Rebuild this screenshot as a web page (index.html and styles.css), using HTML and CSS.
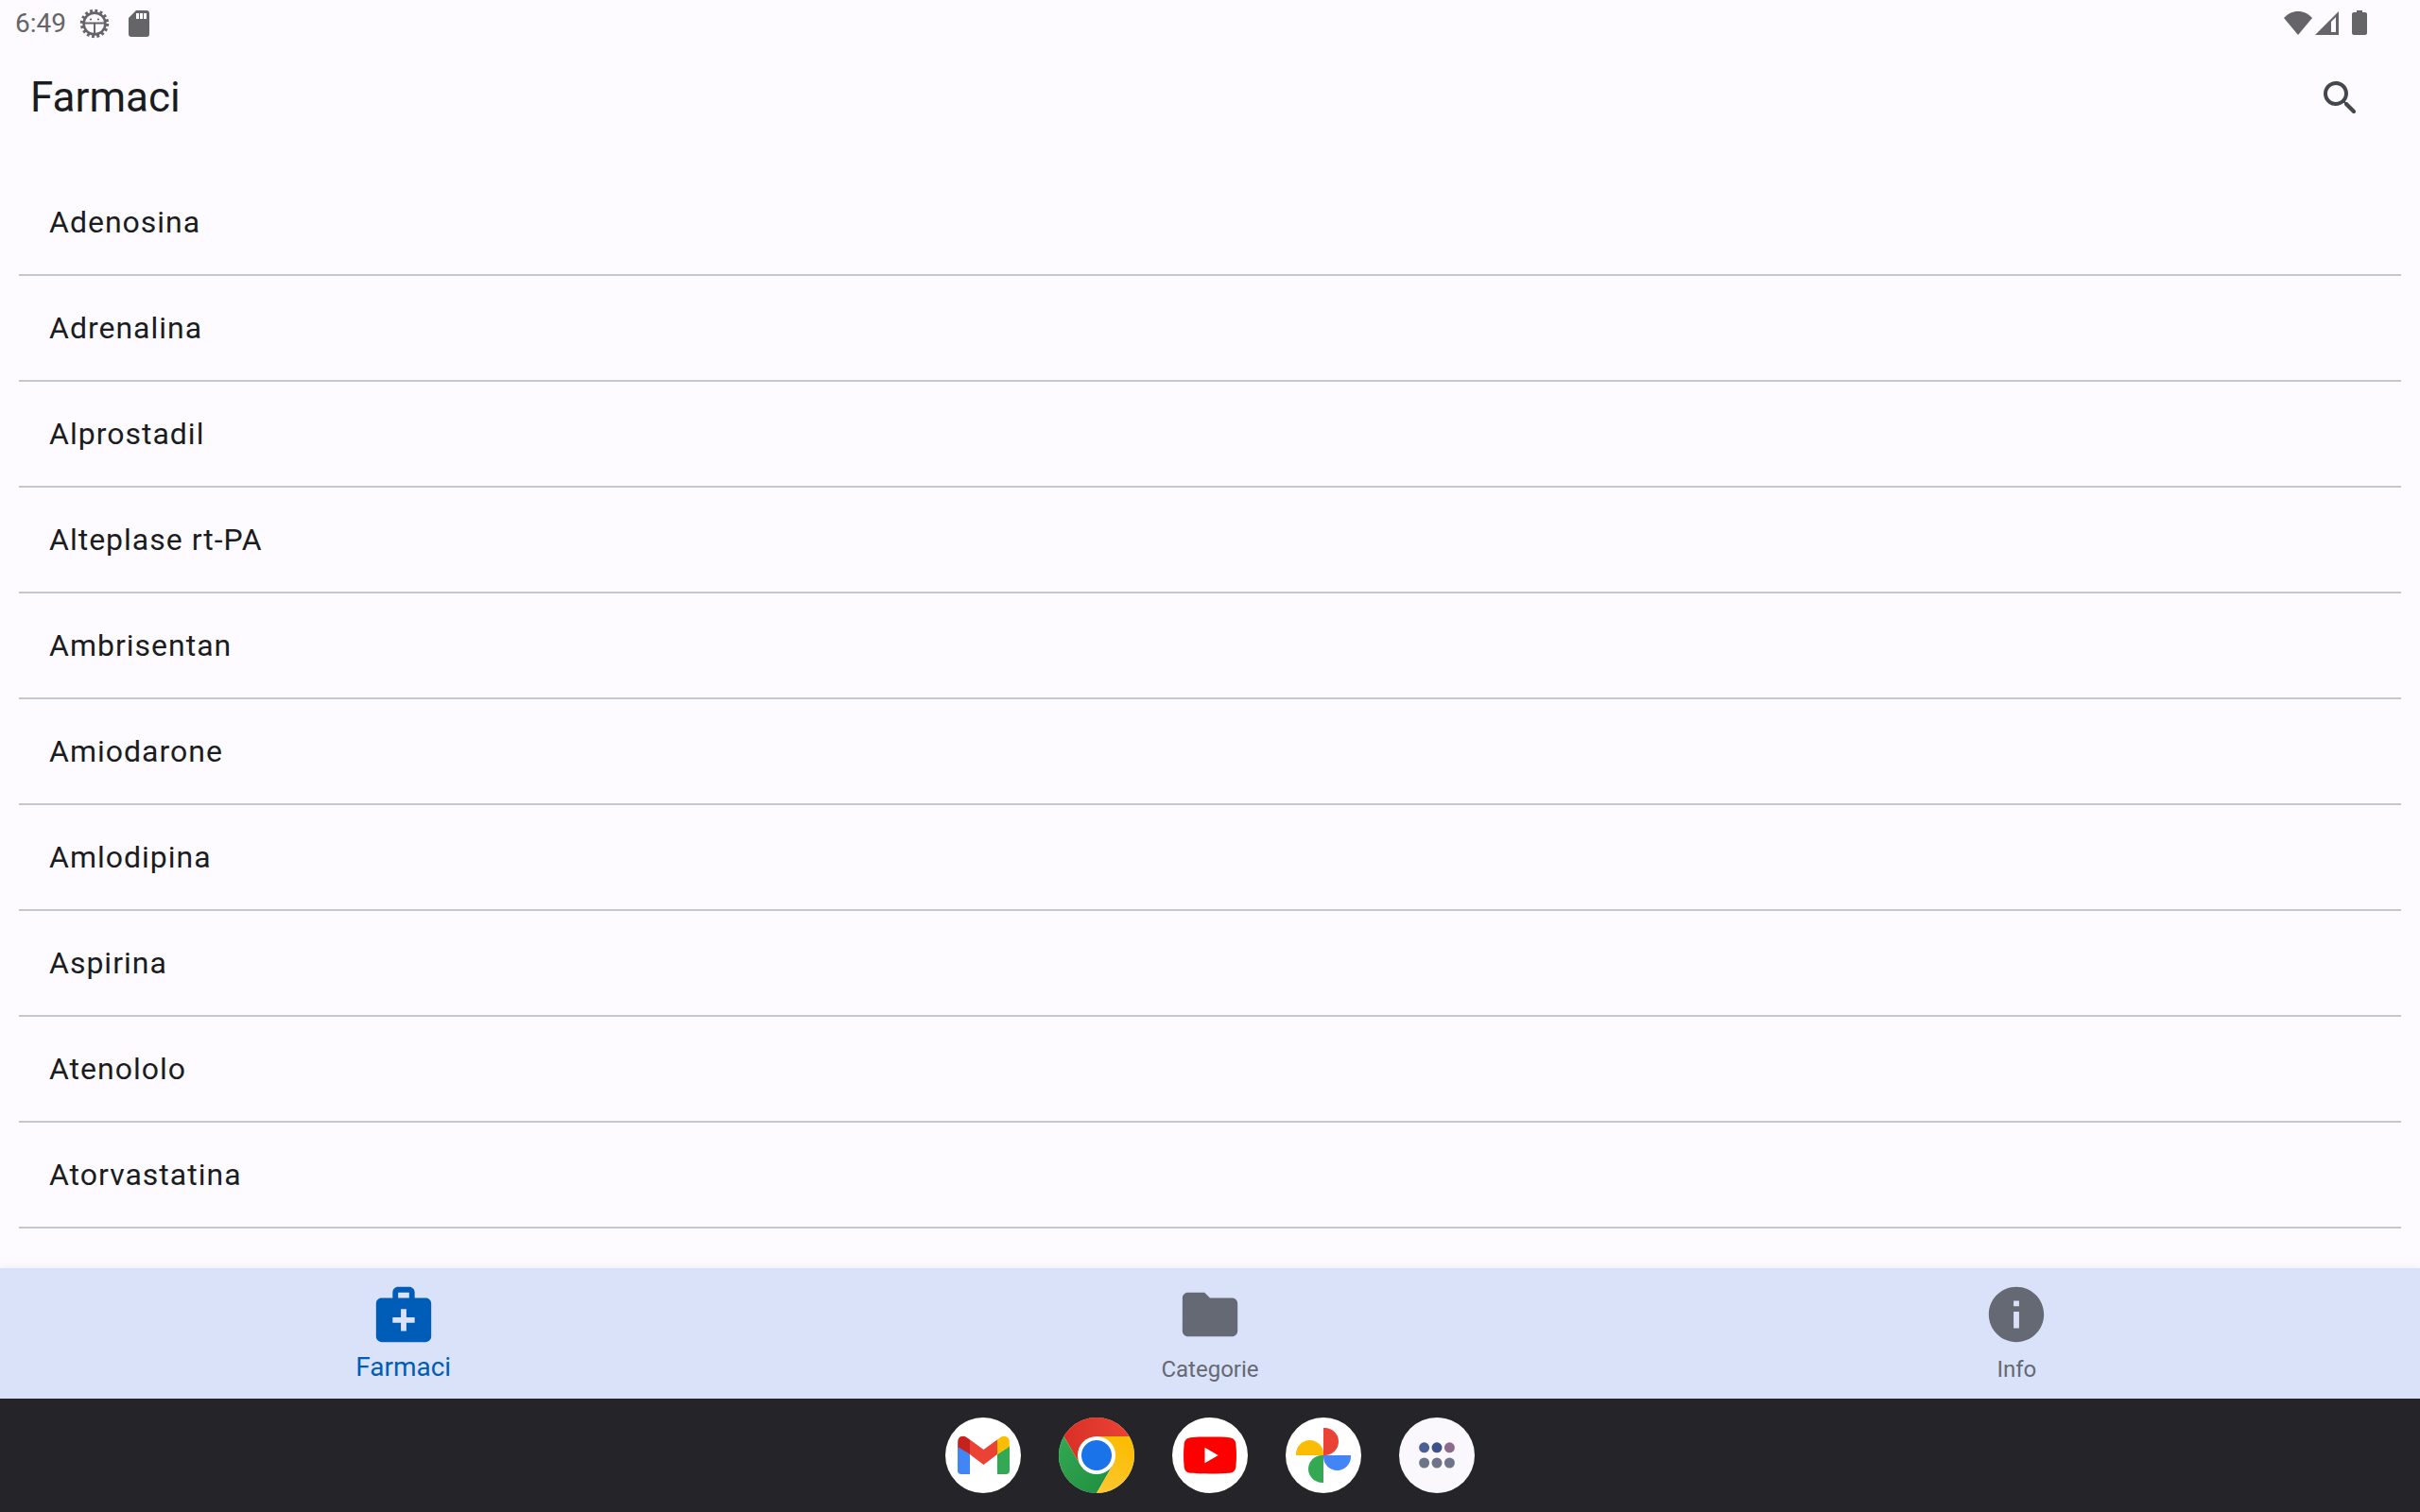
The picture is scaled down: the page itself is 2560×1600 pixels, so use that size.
FILE: index.html
```html
<!DOCTYPE html>
<html lang="it">
<head>
<meta charset="utf-8">
<meta name="viewport" content="width=device-width, initial-scale=1">
<title>Farmaci</title>
<link rel="stylesheet" href="styles.css">
</head>
<body>
<div class="status-bar">
  <div class="status-group status-left">
    <time class="clock">6:49</time>
    <svg class="status-gear" viewBox="0 0 32 32" aria-hidden="true">
      <circle cx="16" cy="16" r="11.400" fill="none" stroke="currentColor" stroke-width="2.600"/>
      <circle cx="16" cy="16" r="13.500" fill="none" stroke="currentColor" stroke-width="3.400" stroke-dasharray="2.800 2.502"/>
      <path d="M5 15.600h22M16 15.600V28" stroke="currentColor" stroke-width="2" fill="none"/>
      <circle cx="12" cy="11.500" r="1.100" fill="currentColor"/>
      <circle cx="20" cy="11.500" r="1.100" fill="currentColor"/>
    </svg>
    <svg class="status-card" viewBox="0 0 22 28" aria-hidden="true">
      <path fill="currentColor" fill-rule="evenodd" d="M8 0h11a3 3 0 0 1 3 3v22a3 3 0 0 1-3 3H3a3 3 0 0 1-3-3V8zM8 3v6h3V3zM12 3v6h3V3zM16 3v6h3V3z"/>
    </svg>
  </div>
  <div class="status-group">
    <svg class="status-wifi" viewBox="0 0 30 25" aria-hidden="true"><path fill="currentColor" d="M15 25 0 7C4 2.500 9.500 0 15 0s11 2.500 15 7z"/></svg>
    <svg class="status-signal" viewBox="0 0 25 25" aria-hidden="true"><path fill="currentColor" fill-rule="evenodd" d="M25 0v25H0zM17 11v11h5V6z"/></svg>
    <svg class="status-battery" viewBox="0 0 16 26" aria-hidden="true"><path fill="currentColor" d="M5 0h6v2h3a2 2 0 0 1 2 2v20a2 2 0 0 1-2 2H2a2 2 0 0 1-2-2V4a2 2 0 0 1 2-2h3z"/></svg>
  </div>
</div>

<header class="app-bar">
  <h1 class="title">Farmaci</h1>
  <button class="search" type="button" aria-label="Cerca">
    <svg viewBox="0 0 24 24" aria-hidden="true"><path fill="currentColor" d="M15.500 14h-.79l-.28-.27c1.200-1.400 1.820-3.310 1.480-5.340-.47-2.780-2.790-5-5.590-5.340-4.230-.52-7.790 3.040-7.270 7.270.34 2.800 2.560 5.120 5.340 5.590 2.030.34 3.940-.28 5.340-1.480l.27.28v.79l4.250 4.250c.41.41 1.080.41 1.490 0 .41-.41.41-1.080 0-1.490L15.500 14zm-6 0C7.010 14 5 11.990 5 9.500S7.010 5 9.500 5 14 7.010 14 9.500 11.990 14 9.500 14z"/></svg>
  </button>
</header>

<main class="content">
  <ul class="drug-list">
    <li><a class="drug" href="#adenosina">Adenosina</a></li>
    <li><a class="drug" href="#adrenalina">Adrenalina</a></li>
    <li><a class="drug" href="#alprostadil">Alprostadil</a></li>
    <li><a class="drug" href="#alteplase">Alteplase rt-PA</a></li>
    <li><a class="drug" href="#ambrisentan">Ambrisentan</a></li>
    <li><a class="drug" href="#amiodarone">Amiodarone</a></li>
    <li><a class="drug" href="#amlodipina">Amlodipina</a></li>
    <li><a class="drug" href="#aspirina">Aspirina</a></li>
    <li><a class="drug" href="#atenololo">Atenololo</a></li>
    <li><a class="drug" href="#atorvastatina">Atorvastatina</a></li>
  </ul>
</main>

<nav class="tabs">
  <a class="tab tab-active" href="#farmaci" aria-current="page">
    <svg viewBox="0 0 24 24" aria-hidden="true"><path fill="currentColor" d="M20 6h-4V4c0-1.100-.9-2-2-2h-4c-1.100 0-2 .9-2 2v2H4c-1.100 0-2 .9-2 2v12c0 1.100.9 2 2 2h16c1.100 0 2-.9 2-2V8c0-1.100-.9-2-2-2zM10 4h4v2h-4V4zm6 11h-3v3h-2v-3H8v-2h3v-3h2v3h3v2z"/></svg>
    <span class="tab-label">Farmaci</span>
  </a>
  <a class="tab" href="#categorie">
    <svg viewBox="0 0 24 24" aria-hidden="true"><path fill="currentColor" d="M10 4H4c-1.100 0-1.990.9-1.990 2L2 18c0 1.100.9 2 2 2h16c1.100 0 2-.9 2-2V8c0-1.100-.9-2-2-2h-8l-2-2z"/></svg>
    <span class="tab-label">Categorie</span>
  </a>
  <a class="tab" href="#info">
    <svg viewBox="0 0 24 24" aria-hidden="true"><path fill="currentColor" d="M12 2C6.480 2 2 6.480 2 12s4.480 10 10 10 10-4.480 10-10S17.520 2 12 2zm1 15h-2v-6h2v6zm0-8h-2V7h2v2z"/></svg>
    <span class="tab-label">Info</span>
  </a>
</nav>

<footer class="dock">
  <button class="dock-app" type="button" aria-label="Gmail">
    <svg viewBox="0 0 80 80" aria-hidden="true">
      <path fill="#4285f4" d="M13 30v26a4 4 0 0 0 4 4h9V39z"/>
      <path fill="#34a853" d="M55 39v21h9a4 4 0 0 0 4-4V30z"/>
      <path fill="#c5221f" d="M13.200 31v-5.500c0-5.200 5.200-7.500 9.300-4.600L26 23.500V39z"/>
      <path fill="#fbbc04" d="M67.800 31v-5.500c0-5.200-5.200-7.500-9.300-4.600L55 23.500V39z"/>
      <path fill="#ea4335" d="M26 23.400 40.500 34 55 23.400V39L40.500 50 26 39z"/>
    </svg>
  </button>
  <button class="dock-app" type="button" aria-label="Chrome">
    <svg viewBox="0 0 80 80" aria-hidden="true">
      <defs>
        <linearGradient id="chrome-red"><stop offset="0" stop-color="#d93025"/><stop offset="1" stop-color="#ea4335"/></linearGradient>
        <linearGradient id="chrome-yellow" x1="0" y1="1" x2="0.400" y2="0"><stop offset="0" stop-color="#fcc934"/><stop offset="1" stop-color="#fbbc04"/></linearGradient>
        <linearGradient id="chrome-green" x1="1" y1="1" x2="0" y2="0"><stop offset="0" stop-color="#1e8e3e"/><stop offset="1" stop-color="#34a853"/></linearGradient>
      </defs>
      <path fill="url(#chrome-red)" d="M40 20h34.640A40 40 0 0 0 5.360 20L22.680 50 40 40z"/>
      <path fill="url(#chrome-green)" d="M22.680 50 5.360 20A40 40 0 0 0 40 80L57.320 50 40 40z"/>
      <path fill="url(#chrome-yellow)" d="M57.320 50 40 80A40 40 0 0 0 74.640 20H40v20z"/>
      <circle cx="40" cy="40" r="20" fill="#fff"/>
      <circle cx="40" cy="40" r="16" fill="#1a73e8"/>
    </svg>
  </button>
  <button class="dock-app" type="button" aria-label="YouTube">
    <svg viewBox="0 0 80 80" aria-hidden="true">
      <path fill="#f00" d="M40 20.500c8 0 15 .1 20.500.7 4.200.4 6.300 2.600 6.800 6.300.9 8.200.9 16.800 0 25-.5 3.700-2.600 5.900-6.800 6.300-11 .9-30 .9-41 0-4.200-.4-6.300-2.600-6.800-6.300-.9-8.200-.9-16.800 0-25 .5-3.700 2.600-5.900 6.800-6.300C25 20.600 32 20.500 40 20.500z"/>
      <path fill="#fff" d="M34.500 31.800v16.400L48.700 40z"/>
    </svg>
  </button>
  <button class="dock-app" type="button" aria-label="Foto">
    <svg viewBox="0 0 80 80" aria-hidden="true">
      <path fill="#ea4335" d="M40 11h1.500C49.500 11 56 17.500 56 25.500S49.500 40 41.500 40H40z"/>
      <path fill="#4285f4" d="M69 40v1.200C69 49.200 62.500 56 54.500 56S40 49.500 40 41.500V40z"/>
      <path fill="#34a853" d="M40 69h-1.200C30.800 69 24 62.500 24 54.500S30.500 40 38.500 40H40z"/>
      <path fill="#fbbc04" d="M11 40v-1.200C11 30.800 17.500 24 25.500 24S40 30.500 40 38.500V40z"/>
    </svg>
  </button>
  <button class="dock-app dock-all" type="button" aria-label="Tutte le app">
    <svg viewBox="0 0 80 80" aria-hidden="true">
      <g fill="#6f7589"><circle cx="26.600" cy="48" r="5.500"/><circle cx="40" cy="48" r="5.500"/><circle cx="53.400" cy="48" r="5.500"/></g>
      <circle cx="26.600" cy="31.800" r="5.500" fill="#4b5f97"/>
      <circle cx="40" cy="31.800" r="5.500" fill="#3c5288"/>
      <circle cx="53.400" cy="31.800" r="5.500" fill="#8d6a8b"/>
    </svg>
  </button>
</footer>
</body>
</html>
```
FILE: styles.css
```css
* {
  box-sizing: border-box;
}

body {
  margin: 0;
  min-height: 100vh;
  display: flex;
  flex-direction: column;
  background: #fdfbff;
  color: #1a1c1e;
  font-family: Roboto, "Liberation Sans", sans-serif;
}

svg {
  display: block;
}

a {
  color: inherit;
  text-decoration: none;
}

button {
  padding: 0;
  border: 0;
  background: none;
  color: inherit;
  cursor: pointer;
}

/* System status bar */
.status-bar {
  display: flex;
  justify-content: space-between;
  align-items: center;
  height: 48px;
  padding: 0 56px 0 16px;
  color: #656567;
}

.status-group {
  display: flex;
  align-items: center;
}

.status-left {
  padding-top: 2px;
}

.clock {
  font-size: 28px;
  line-height: 46px;
  margin-right: 14px;
}

.status-gear {
  width: 32px;
  height: 32px;
  margin-right: 20px;
}

.status-card {
  width: 22px;
  height: 28px;
}

.status-wifi {
  width: 30px;
  height: 25px;
  margin-right: 3px;
}

.status-signal {
  width: 25px;
  height: 25px;
  margin-right: 14px;
}

.status-battery {
  width: 16px;
  height: 26px;
}

/* App bar */
.app-bar {
  display: flex;
  justify-content: space-between;
  align-items: center;
  height: 112px;
  padding: 0 60px 0 32px;
}

.title {
  margin: 0;
  padding-bottom: 2px;
  font-size: 44px;
  font-weight: 400;
  line-height: 56px;
}

.search {
  color: #44474e;
}

.search svg {
  width: 48px;
  height: 48px;
}

/* Drug list */
.content {
  flex: 1;
  padding: 20px 20px 0;
}

.drug-list {
  margin: 0;
  padding: 0;
  list-style: none;
}

.drug {
  display: block;
  padding: 35px 32px;
  border-bottom: 2px solid #c4c6d0;
  font-size: 32px;
  line-height: 40px;
  letter-spacing: 1px;
}

/* Bottom navigation */
.tabs {
  display: grid;
  grid-template-columns: repeat(3, 1fr);
  align-items: start;
  background: #dae2f9;
  box-shadow: 0 0 8px rgba(0, 0, 0, 0.08);
}

.tab {
  display: flex;
  flex-direction: column;
  align-items: center;
  padding: 14px 0 8px;
  color: #656973;
}

.tab svg {
  width: 70px;
  height: 70px;
}

.tab-label {
  font-size: 24px;
  line-height: 46px;
}

.tab-active {
  color: #005db7;
}

.tab-active .tab-label {
  font-size: 28px;
  line-height: 42px;
}

/* Taskbar */
.dock {
  display: flex;
  justify-content: center;
  gap: 40px;
  padding: 20px;
  background: #252429;
}

.dock-app {
  width: 80px;
  height: 80px;
  border-radius: 50%;
  background: #fff;
}

.dock-all {
  background: #faf8fd;
}
```
